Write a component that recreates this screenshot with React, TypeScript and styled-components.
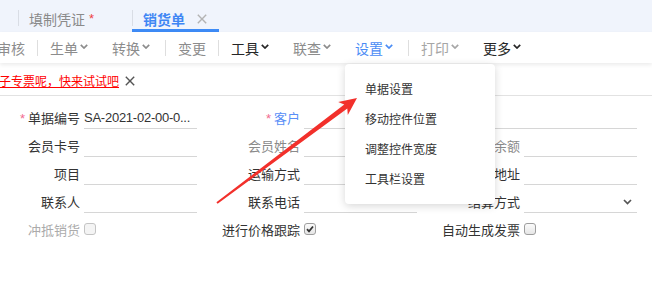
import React from "react";
import styled, { createGlobalStyle } from "styled-components";

const GlobalStyle = createGlobalStyle`
  html, body { margin: 0; padding: 0; background: #ffffff; }
  body {
    font-family: "Noto Sans CJK SC", "Liberation Sans", sans-serif;
    color: #333;
  }
  #root { width: 652px; height: 286px; overflow: hidden; }
`;

const Page = styled.div`
  position: relative;
  width: 652px;
  height: 286px;
  overflow: hidden;
  background: #fff;
`;

/* ---------- tabs ---------- */
const TabBar = styled.div`
  display: flex;
  height: 32px;
  padding-left: 18px;
  background: #f0f4fc;
`;

const Tab = styled.div<{ $active?: boolean }>`
  display: flex;
  align-items: center;
  box-sizing: border-box;
  height: 32px;
  padding: 8px 12px 0 11px;
  border-bottom: 3px solid ${(p) => (p.$active ? "#3e8bf6" : "transparent")};
  background: linear-gradient(#d9dde5, #d9dde5) left 10px / 1px 16px no-repeat;
  font-size: 14px;
  line-height: 20px;
  font-weight: ${(p) => (p.$active ? 600 : 400)};
  color: ${(p) => (p.$active ? "#3f86f4" : "#8a8a8a")};
  white-space: nowrap;
`;

const Dirty = styled.span`
  margin: 0 4px;
  font-family: "Liberation Sans", sans-serif;
  font-size: 13px;
  color: #ee3f3f;
`;

const CloseIcon = styled.svg<{ $hidden?: boolean }>`
  flex: none;
  width: 10px;
  height: 10px;
  margin-left: 12px;
  visibility: ${(p) => (p.$hidden ? "hidden" : "visible")};
`;

/* ---------- toolbar ---------- */
const Toolbar = styled.div`
  position: relative;
  z-index: 2;
  height: 31px;
  background: #fff;
  box-shadow: 0 2px 4px rgba(0, 0, 0, 0.08);
`;

const ToolRow = styled.div`
  display: flex;
  align-items: center;
  height: 100%;
  margin-left: -15px;
`;

type Tone = "muted" | "dark" | "active" | "faint";
const toneColor: Record<Tone, string> = {
  muted: "#8c8c8c",
  dark: "#262626",
  active: "#4a8cf5",
  faint: "#a6a6a6",
};

const ToolItem = styled.div<{ $tone: Tone }>`
  position: relative;
  display: flex;
  align-items: center;
  align-self: stretch;
  padding: 1px 12px 0;
  font-size: 14px;
  line-height: 20px;
  color: ${(p) => toneColor[p.$tone]};
  white-space: nowrap;
`;

const Caret = styled.svg`
  flex: none;
  width: 8px;
  height: 5px;
  margin: 0 0 3px 2px;
`;

const ToolSep = styled.div<{ $afterMenu?: boolean }>`
  flex: none;
  width: 1px;
  height: 16px;
  margin-left: ${(p) => (p.$afterMenu ? 3 : 0)}px;
  background: #dedede;
`;

const Menu = styled.div`
  position: absolute;
  top: calc(100% + 1px);
  left: 2px;
  width: 150px;
  padding: 10px 0;
  background: #fff;
  border-radius: 4px;
  box-shadow: 0 2px 9px rgba(0, 0, 0, 0.16);
`;

const MenuItem = styled.div`
  height: 30px;
  padding-left: 20px;
  font-size: 12px;
  line-height: 30px;
  color: #333;
`;

/* ---------- notice ---------- */
const Notice = styled.div`
  display: flex;
  align-items: center;
  box-sizing: border-box;
  height: 33px;
  padding-top: 4px;
  border-bottom: 1px solid #e2e2e2;
`;

const NoticeLink = styled.span`
  margin-left: -1px;
  font-size: 12px;
  line-height: 16px;
  color: #ff0000;
  text-decoration: underline;
`;

const NoticeClose = styled.svg`
  width: 10px;
  height: 10px;
  margin-left: 6px;
`;

/* ---------- form ---------- */
const Form = styled.div`
  display: grid;
  grid-template-columns: repeat(3, 220px);
  grid-auto-rows: 22px;
  row-gap: 6px;
  padding-top: 11px;
`;

const Field = styled.div<{ $span?: number }>`
  display: flex;
  align-items: center;
  grid-column: span ${(p) => p.$span ?? 1};
`;

type LabelTone = "normal" | "muted" | "disabled" | "link";
const labelColor: Record<LabelTone, string> = {
  normal: "#333333",
  muted: "#8a8a8a",
  disabled: "#ababab",
  link: "#5a8ff7",
};

const Label = styled.div<{ $tone?: LabelTone }>`
  flex: none;
  width: 80px;
  text-align: right;
  font-size: 13px;
  line-height: 22px;
  white-space: nowrap;
  color: ${(p) => labelColor[p.$tone ?? "normal"]};
`;

const Required = styled.span`
  margin-right: 3px;
  font-family: "Liberation Sans", sans-serif;
  color: #f26b8f;
`;

const Input = styled.div<{ $wide?: boolean }>`
  display: flex;
  align-items: center;
  justify-content: space-between;
  box-sizing: border-box;
  width: ${(p) => (p.$wide ? 333 : 113)}px;
  height: 22px;
  margin-left: 4px;
  padding-right: 5px;
  border-bottom: 1px solid #d6d6d6;
  font-family: "Liberation Sans", sans-serif;
  font-size: 13px;
  letter-spacing: -0.25px;
  color: #333;
  white-space: nowrap;
  overflow: hidden;
`;

const SelectCaret = styled.svg`
  width: 9px;
  height: 6px;
`;

const Check = styled.span<{ $disabled?: boolean }>`
  display: flex;
  align-items: center;
  justify-content: center;
  box-sizing: border-box;
  width: 12px;
  height: 12px;
  margin: 0 0 2px 4px;
  border: 1px solid ${(p) => (p.$disabled ? "#c4c4c4" : "#9e9e9e")};
  border-radius: 3px;
  background: ${(p) => (p.$disabled ? "#f4f4f4" : "linear-gradient(#fbfbfb, #e6e6e6)")};
`;

const Overlay = styled.svg`
  position: absolute;
  top: 0;
  left: 0;
  z-index: 5;
  pointer-events: none;
`;

const Chevron = () => (
  <Caret viewBox="0 0 8 5">
    <polyline points="0.8,0.8 4,4 7.2,0.8" fill="none" stroke="currentColor" strokeWidth="1.7" />
  </Caret>
);

const XGlyph: React.FC<{ color: string; width?: number; hidden?: boolean; notice?: boolean }> = ({ color, width = 1.3, hidden, notice }) => {
  const lines = (
    <>
      <line x1="0.8" y1="0.8" x2="9.2" y2="9.2" stroke={color} strokeWidth={width} />
      <line x1="9.2" y1="0.8" x2="0.8" y2="9.2" stroke={color} strokeWidth={width} />
    </>
  );
  if (notice) return <NoticeClose viewBox="0 0 10 10">{lines}</NoticeClose>;
  return (
    <CloseIcon viewBox="0 0 10 10" $hidden={hidden}>
      {lines}
    </CloseIcon>
  );
};

type ToolDef = { kind: "item"; text: string; tone: Tone; menu?: boolean; open?: boolean } | { kind: "sep"; afterMenu?: boolean };

const tools: ToolDef[] = [
  { kind: "item", text: "审核", tone: "muted" },
  { kind: "sep" },
  { kind: "item", text: "生单", tone: "muted", menu: true },
  { kind: "item", text: "转换", tone: "muted", menu: true },
  { kind: "sep", afterMenu: true },
  { kind: "item", text: "变更", tone: "muted" },
  { kind: "sep" },
  { kind: "item", text: "工具", tone: "dark", menu: true },
  { kind: "item", text: "联查", tone: "muted", menu: true },
  { kind: "item", text: "设置", tone: "active", menu: true, open: true },
  { kind: "sep", afterMenu: true },
  { kind: "item", text: "打印", tone: "faint", menu: true },
  { kind: "item", text: "更多", tone: "dark", menu: true },
];

const menuItems = ["单据设置", "移动控件位置", "调整控件宽度", "工具栏设置"];

type FieldDef =
  | { type: "input"; label: string; tone?: LabelTone; required?: boolean; value?: string; span?: number; select?: boolean }
  | { type: "check"; label: string; tone?: LabelTone; checked?: boolean; disabled?: boolean };

const fields: FieldDef[] = [
  { type: "input", label: "单据编号", required: true, value: "SA-2021-02-00-0..." },
  { type: "input", label: "客户", required: true, tone: "link", span: 2 },
  { type: "input", label: "会员卡号" },
  { type: "input", label: "会员姓名", tone: "muted" },
  { type: "input", label: "应收余额", tone: "muted" },
  { type: "input", label: "项目" },
  { type: "input", label: "运输方式" },
  { type: "input", label: "送货地址" },
  { type: "input", label: "联系人" },
  { type: "input", label: "联系电话" },
  { type: "input", label: "结算方式", select: true },
  { type: "check", label: "冲抵销货", tone: "disabled", disabled: true },
  { type: "check", label: "进行价格跟踪", checked: true },
  { type: "check", label: "自动生成发票" },
];

export default function App() {
  return (
    <>
      <GlobalStyle />
      <Page>
        <TabBar>
          <Tab>
            填制凭证
            <Dirty>*</Dirty>
            <XGlyph color="#b0b0b0" hidden />
          </Tab>
          <Tab $active>
            销货单
            <XGlyph color="#b3b3b3" width={1.4} />
          </Tab>
        </TabBar>

        <Toolbar>
          <ToolRow>
            {tools.map((t, i) =>
              t.kind === "sep" ? (
                <ToolSep key={i} $afterMenu={t.afterMenu} />
              ) : (
                <ToolItem key={i} $tone={t.tone}>
                  {t.text}
                  {t.menu && <Chevron />}
                  {t.open && (
                    <Menu>
                      {menuItems.map((m) => (
                        <MenuItem key={m}>{m}</MenuItem>
                      ))}
                    </Menu>
                  )}
                </ToolItem>
              )
            )}
          </ToolRow>
        </Toolbar>

        <Notice>
          <NoticeLink>子专票呢，快来试试吧</NoticeLink>
          <XGlyph color="#555" width={1.4} notice />
        </Notice>

        <Form>
          {fields.map((f) =>
            f.type === "input" ? (
              <Field key={f.label} $span={f.span}>
                <Label $tone={f.tone}>
                  {f.required && <Required>*</Required>}
                  {f.label}
                </Label>
                <Input $wide={f.span === 2}>
                  <span>{f.value ?? ""}</span>
                  {f.select && (
                    <SelectCaret viewBox="0 0 9 6">
                      <polyline points="1,1 4.5,4.5 8,1" fill="none" stroke="#555" strokeWidth="1.7" />
                    </SelectCaret>
                  )}
                </Input>
              </Field>
            ) : (
              <Field key={f.label}>
                <Label $tone={f.tone}>{f.label}</Label>
                <Check $disabled={f.disabled}>
                  {f.checked && (
                    <svg width="8" height="8" viewBox="0 0 8 8">
                      <polyline points="1,4.2 3,6.3 7,1.5" fill="none" stroke="#333" strokeWidth="1.8" />
                    </svg>
                  )}
                </Check>
              </Field>
            )
          )}
        </Form>

        <Overlay width="652" height="286" viewBox="0 0 652 286">
          <polygon
            points="216.4,202.2 344.3,104.4 338.2,102.1 357,98 347.8,114.9 347.3,108.4 217.6,203.8"
            fill="#f2302b"
          />
        </Overlay>
      </Page>
    </>
  );
}
